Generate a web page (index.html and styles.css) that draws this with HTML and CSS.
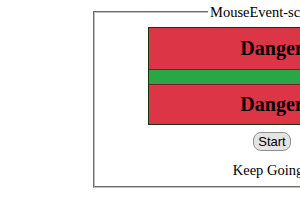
FILE: index.html
```html
<!DOCTYPE html>
<html lang="en">
<head>
    <meta charset="UTF-8">
    <meta name="viewport" content="width=device-width, initial-scale=1.0">
    <title>MouseEvent-scroll</title>
    <link rel="stylesheet" href="styles.css">
</head>
<body>
    <fieldset class="panel">
        <legend>MouseEvent-scroll</legend>
        <div class="stage">
            <div class="zone danger">Danger</div>
            <div class="zone safe"></div>
            <div class="zone danger">Danger</div>
        </div>
        <button class="start">Start</button>
        <p class="status">Keep Going</p>
    </fieldset>
</body>
</html>
```

FILE: styles.css
```css
html, body {
    overflow: hidden;
}

body {
    font-family: "Liberation Serif", "Times New Roman", serif;
    font-size: 16px;
    color: #000;
    background-color: #fff;
    margin: 0;
    padding-top: 4px;
}

.panel {
    width: 330px;
    margin: 0 0 0 93px;
    padding: 7px 12px 7px;
    border: 2px groove #c0c0c0;
}

.panel legend {
    text-align: left;
    margin-left: 101px;
    padding: 0 2px;
    font-size: 14.5px;
    line-height: 16px;
}

.stage {
    width: 246px;
    margin: 0 auto;
    border: 1px solid #143214;
    text-align: center;
}

.zone {
    font-weight: bold;
    font-size: 20px;
}

.danger {
    background-color: #dc3545;
    height: 41px;
    line-height: 41px;
}

.danger:last-child {
    height: 39px;
    line-height: 39px;
}

.safe {
    background-color: #28a745;
    height: 14px;
    border-top: 1px solid #7d1f28;
    border-bottom: 1px solid #7d1f28;
}

.start {
    display: block;
    font-family: Arial, "Liberation Sans", sans-serif;
    font-size: 13px;
    margin: 7px auto 0;
    height: 19px;
    padding: 0 4px;
    border: 1px solid #8f8f8f;
    border-radius: 8px;
    background-color: #e4e4e4;
    color: #000;
}

.status {
    margin: 10px 0 0;
    padding-right: 8px;
    font-size: 14.5px;
    line-height: 18px;
    text-align: center;
}
```
